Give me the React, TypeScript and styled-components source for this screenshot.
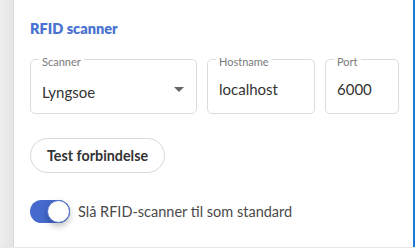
import React from 'react'
import styled, {createGlobalStyle} from 'styled-components'

const GlobalStyle = createGlobalStyle`
  html, body {
    margin: 0;
    padding: 0;
    background: #ffffff;
  }
  body {
    font-family: Lato, 'Open Sans', sans-serif;
  }
`

const Page = styled.div`
  display: flex;
  height: 248px;
  border-bottom: 1px solid #e8e8e8;
  box-sizing: border-box;
`

const SideStrip = styled.div`
  width: 13px;
  flex-shrink: 0;
  background: linear-gradient(to right, #eeeeee, #e4e4e4);
  border-right: 1px solid #dadada;
`

const Panel = styled.section`
  flex: 1;
  padding: 20px 14px 0 16px;
  border-right: 2px solid #1b7ad6;
`

const Heading = styled.h2`
  margin: 0;
  font-size: 14.5px;
  line-height: 18px;
  font-weight: 800;
  color: #4a74d0;
`

const FieldRow = styled.div`
  display: flex;
  gap: 10px;
  margin-top: 13px;
`

const Field = styled.fieldset<{$width: number}>`
  margin: 0;
  padding: 0 10px 8px 8px;
  width: ${p => p.$width}px;
  min-width: 0;
  box-sizing: border-box;
  border: 1px solid #dcdcdc;
  border-radius: 5px;
`

const Label = styled.legend`
  padding: 4px 3px 0;
  font-size: 11px;
  line-height: 13px;
  color: #7a7a7a;
`

const ValueLine = styled.div`
  display: flex;
  align-items: center;
  justify-content: space-between;
  margin-top: 11px;
  padding-left: 3px;
  font-size: 15px;
  line-height: 20px;
  color: #333333;
`

const Arrow = styled.svg`
  width: 24px;
  height: 24px;
  margin: -2px -5px 4px 0;
  fill: #666666;
`

const TestButton = styled.button`
  display: block;
  margin-top: 24px;
  height: 35px;
  padding: 0 16px;
  border: 1px solid #d8d8d8;
  border-radius: 18px;
  background: #ffffff;
  font-family: inherit;
  font-size: 14.3px;
  font-weight: 700;
  color: #333333;
`

const ToggleRow = styled.label`
  display: flex;
  align-items: center;
  gap: 8px;
  margin-top: 27px;
  font-size: 14.5px;
  color: #4a4a4a;
`

const Track = styled.span<{$on: boolean}>`
  display: flex;
  justify-content: ${p => (p.$on ? 'flex-end' : 'flex-start')};
  width: 40px;
  height: 23px;
  border-radius: 12px;
  background: ${p => (p.$on ? '#4569cc' : '#bbbbbb')};
`

const Thumb = styled.span`
  width: 21px;
  height: 21px;
  border-radius: 50%;
  background: #ffffff;
  border: 1px solid #4569cc;
  box-shadow: 0 3px 6px rgba(0, 0, 0, 0.25);
`

export default function App() {
  const on = true
  return (
    <>
      <GlobalStyle />
      <Page>
        <SideStrip />
        <Panel>
          <Heading>RFID scanner</Heading>
          <FieldRow>
            <Field $width={167}>
              <Label>Scanner</Label>
              <ValueLine>
                Lyngsoe
                <Arrow viewBox="0 0 24 24">
                  <path d="M7 10l5 5 5-5z" />
                </Arrow>
              </ValueLine>
            </Field>
            <Field $width={108}>
              <Label>Hostname</Label>
              <ValueLine>localhost</ValueLine>
            </Field>
            <Field $width={74}>
              <Label>Port</Label>
              <ValueLine>6000</ValueLine>
            </Field>
          </FieldRow>
          <TestButton>Test forbindelse</TestButton>
          <ToggleRow>
            <Track $on={on}>
              <Thumb />
            </Track>
            Slå RFID-scanner til som standard
          </ToggleRow>
        </Panel>
      </Page>
    </>
  )
}
